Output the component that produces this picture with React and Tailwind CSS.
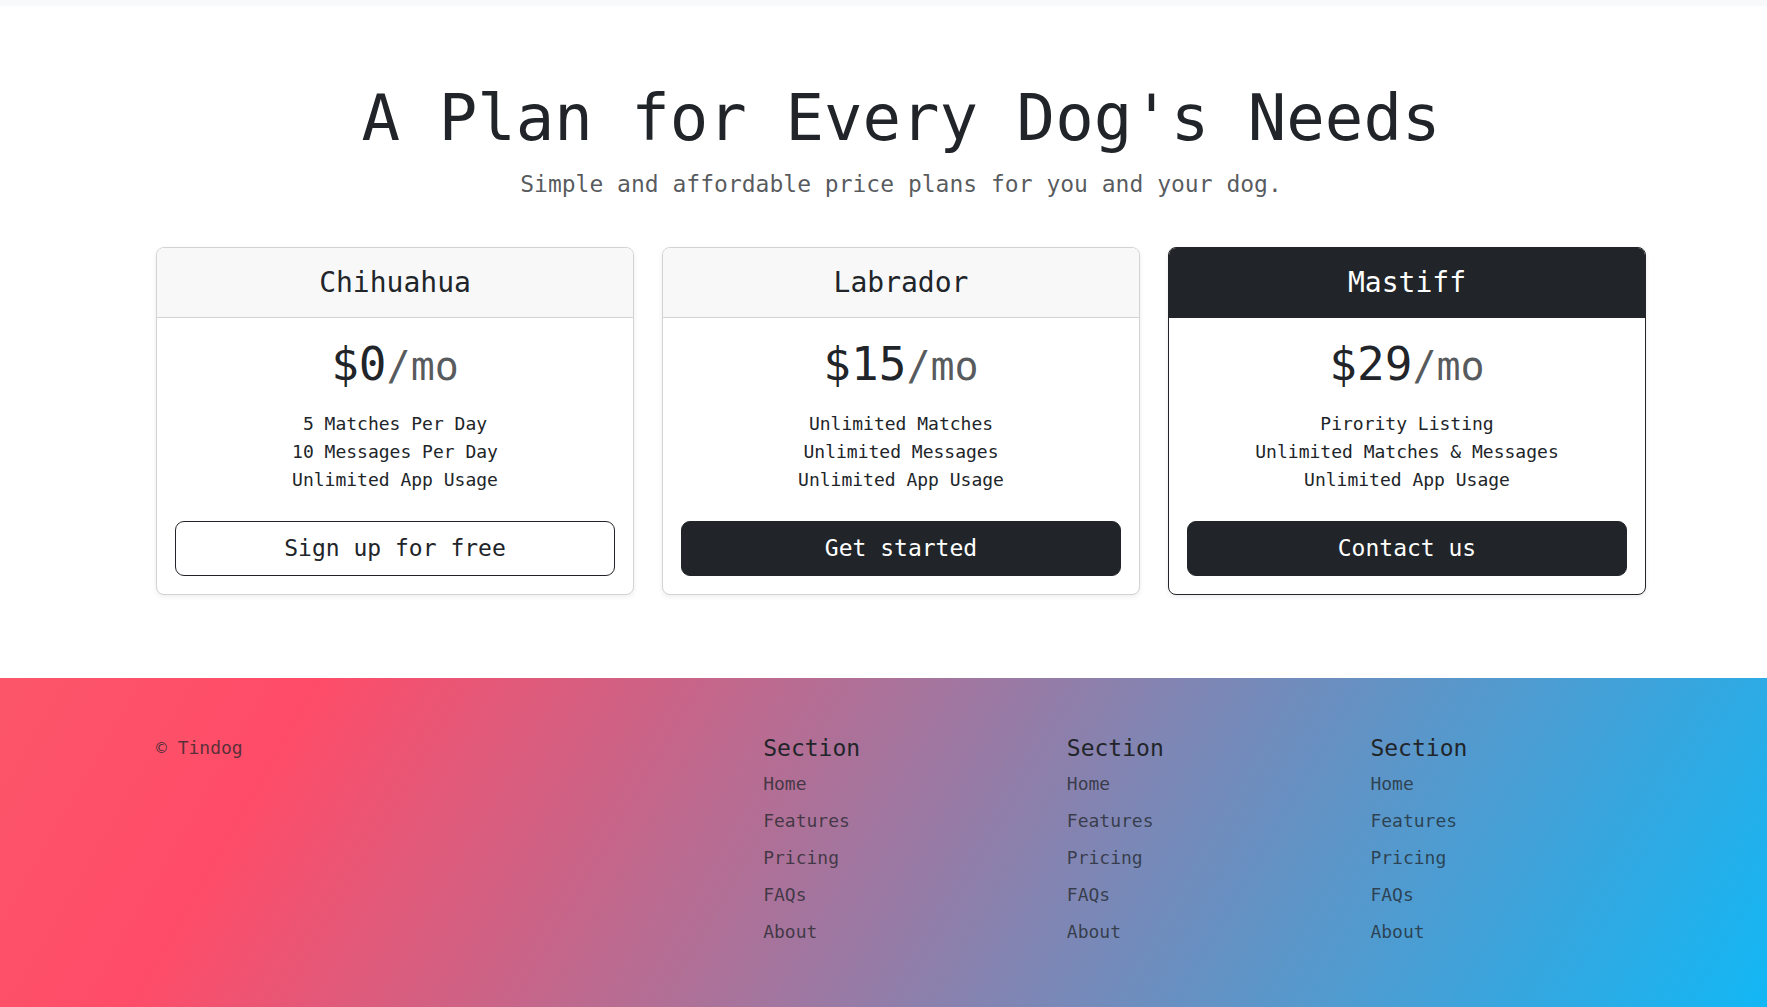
const plans = [
  {
    name: "Chihuahua",
    price: "$0",
    features: ["5 Matches Per Day", "10 Messages Per Day", "Unlimited App Usage"],
    action: "Sign up for free",
    card: "border-[#d3d3d3]",
    header: "bg-[#f8f8f8] border-[#d3d3d3]",
    button: "bg-white text-[#212529]",
  },
  {
    name: "Labrador",
    price: "$15",
    features: ["Unlimited Matches", "Unlimited Messages", "Unlimited App Usage"],
    action: "Get started",
    card: "border-[#d3d3d3]",
    header: "bg-[#f8f8f8] border-[#d3d3d3]",
    button: "bg-[#212529] text-white",
  },
  {
    name: "Mastiff",
    price: "$29",
    features: ["Pirority Listing", "Unlimited Matches & Messages", "Unlimited App Usage"],
    action: "Contact us",
    card: "border-[#212529]",
    header: "bg-[#212529] border-[#212529] text-white",
    button: "bg-[#212529] text-white",
  },
];

const links = ["Home", "Features", "Pricing", "FAQs", "About"];

function PlanCard({ plan }) {
  return (
    <article className={`overflow-hidden rounded-lg border bg-white text-center shadow-[0_2px_5px_rgba(0,0,0,0.075)] ${plan.card}`}>
      <header className={`border-b py-[18px] ${plan.header}`}>
        <h2 className="text-[28px] leading-[33px]">{plan.name}</h2>
      </header>
      <div className="px-[18px] pt-[19px] pb-[18px]">
        <p className="text-[46px] leading-[55px]">
          {plan.price}
          <small className="text-[40px] text-[#212529]/75">/mo</small>
        </p>
        <ul className="mt-4 mb-[27px] text-[18px] leading-7">
          {plan.features.map((feature) => (
            <li key={feature}>{feature}</li>
          ))}
        </ul>
        <button
          type="button"
          className={`h-[55px] w-full rounded-[9px] border border-[#212529] text-[23px] ${plan.button}`}
        >
          {plan.action}
        </button>
      </div>
    </article>
  );
}

function LinkColumn() {
  return (
    <nav>
      <h5 className="mb-2 text-[23px] leading-7">Section</h5>
      <ul className="flex flex-col gap-[9px] leading-7 text-[#212529]/75">
        {links.map((link) => (
          <li key={link}>
            <a href="#">{link}</a>
          </li>
        ))}
      </ul>
    </nav>
  );
}

export default function App() {
  return (
    <div className="bg-white font-['DejaVu_Sans_Mono',monospace] text-[18px] text-[#212529]">
      <div className="h-1.5 bg-[#f8f9fb]" />
      <main className="pt-[74px] pr-[121px] pb-[83px] pl-[156px]">
        <div className="mb-[45px] text-center">
          <h1 className="text-[64px] leading-[77px]">A Plan for Every Dog's Needs</h1>
          <p className="mt-[9px] text-[23px] leading-9 text-[#212529]/75">
            Simple and affordable price plans for you and your dog.
          </p>
        </div>
        <div className="grid grid-cols-3 gap-7">
          {plans.map((plan) => (
            <PlanCard key={plan.name} plan={plan} />
          ))}
        </div>
      </main>
      <footer className="bg-[linear-gradient(300deg,#00bfff,#ff4c68,#ef8172)] bg-[size:180%_180%] bg-[position:97%_50%] pt-14 pr-[121px] pb-[61px] pl-[156px]">
        <div className="grid grid-cols-5 gap-7">
          <p className="col-span-2 leading-7 text-[#212529]/75">© Tindog</p>
          <LinkColumn />
          <LinkColumn />
          <LinkColumn />
        </div>
      </footer>
    </div>
  );
}
